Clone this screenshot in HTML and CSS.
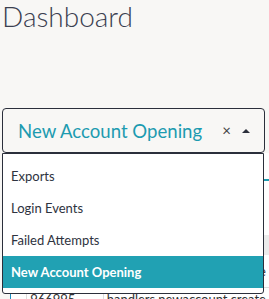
FILE: index.html
```html
<!DOCTYPE html>
<html>
<head>
<meta charset="utf-8">
<link rel="stylesheet" href="styles.css">
</head>
<body>
<h1 class="title">Dashboard</h1>
<div class="filter">
  <div class="select">
    <span class="value">New Account Opening</span>
    <span class="clear">×</span>
    <span class="arrow"></span>
  </div>
  <ul class="menu">
    <li class="option">Exports</li>
    <li class="option">Login Events</li>
    <li class="option">Failed Attempts</li>
    <li class="option selected">New Account Opening</li>
  </ul>
</div>
<table class="grid">
  <thead>
    <tr class="head"><th></th><th>ID</th><th>Handler</th></tr>
  </thead>
  <tbody>
    <tr class="r1"><td></td><td>966991</td><td>handlers.export.create</td></tr>
    <tr class="r2"><td></td><td>966992</td><td>handlers.login.failure</td></tr>
    <tr class="r3 striped"><td></td><td>966993</td><td>handlers.login.attempt</td></tr>
    <tr class="r4"><td></td><td>966994</td><td>handlers.newaccount.create</td></tr>
    <tr class="r5"><td></td><td>966995</td><td>handlers.newaccount.create</td></tr>
  </tbody>
</table>
</body>
</html>
```
FILE: styles.css
```css
html, body {
  margin: 0;
  padding: 0;
  background: #f8f7f5;
  overflow: hidden;
}
body {
  width: 269px;
  height: 299px;
  font-family: Lato, "Open Sans", sans-serif;
  color: #2e3340;
}
.title {
  margin: 0;
  padding: 0 0 0 2px;
  font-weight: 300;
  font-size: 28px;
  line-height: 32px;
  color: #3b4050;
  height: 108px;
}
.filter {
  position: relative;
  margin-left: 2px;
  width: 263px;
}
.select {
  box-sizing: border-box;
  height: 45px;
  border: 1px solid #2b2f3b;
  border-radius: 4px;
  display: flex;
  align-items: center;
  padding: 0 0 0 15px;
  background: #f8f7f5;
}
.value {
  flex: 1;
  font-size: 18.6px;
  color: #1d9bb0;
  white-space: nowrap;
}
.clear {
  font-size: 15px;
  color: #444;
  margin-right: 11px;
  line-height: 1;
}
.arrow {
  width: 0;
  height: 0;
  border-left: 4px solid transparent;
  border-right: 4px solid transparent;
  border-bottom: 4px solid #2b2f3b;
  margin-right: 14px;
}
.menu {
  position: absolute;
  left: 0;
  top: 45px;
  width: 262px;
  box-sizing: border-box;
  margin: 0;
  padding: 6px 0 5px;
  list-style: none;
  background: #fff;
  border: 1px solid #2b2f3b;
  border-radius: 0 0 3px 3px;
  z-index: 2;
}
.option {
  height: 32px;
  line-height: 32px;
  padding-left: 8px;
  font-size: 13px;
  color: #2e3340;
  white-space: nowrap;
}
.option.selected {
  background: #21a1b3;
  color: #fff;
  font-weight: 700;
}
.grid {
  margin-left: 10px;
  border-collapse: collapse;
  font-size: 13px;
  color: #333;
  white-space: nowrap;
  background: #fff;
}
.grid th, .grid td {
  padding: 0 3px;
  text-align: left;
  border-left: 1px solid #ddd;
}
.grid th:first-child, .grid td:first-child {
  border-left: 1px solid #1d8fc0;
  width: 15px;
}
.grid td:nth-child(2), .grid th:nth-child(2) { width: 85px; }
.head { height: 27px; border-bottom: 2px solid #1d9bb0; }
.r1 { height: 28px; }
.r2 { height: 27px; }
.r3 { height: 20px; }
.r4 { height: 32px; border-bottom: 1px solid #ddd; }
.r5 { height: 24px; }
.striped { background: #ebebeb; }
```
